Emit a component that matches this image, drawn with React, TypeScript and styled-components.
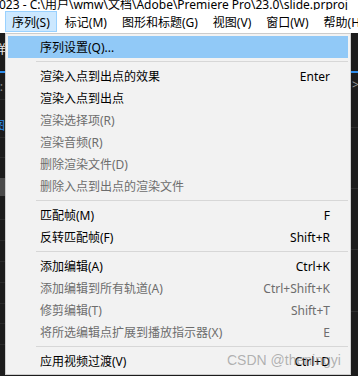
import React from "react";
import styled, { createGlobalStyle } from "styled-components";

const Global = createGlobalStyle`
  html, body { margin: 0; padding: 0; }
  body {
    width: 358px; height: 376px; overflow: hidden;
    background: #1c1c1c;
    font-family: "Noto Sans", "Noto Sans CJK SC", sans-serif;
  }
`;

const Page = styled.div`
  position: relative;
  width: 358px;
  height: 376px;
  display: flex;
  flex-direction: column;
  overflow: hidden;
`;

const TitleBar = styled.div`
  height: 10px;
  background: #ffffff;
  overflow: hidden;
  display: flex;
  align-items: flex-end;
`;

const TitleText = styled.div`
  font-size: 12px;
  line-height: 14px;
  white-space: nowrap;
  color: #000;
  margin-bottom: -2px;
  margin-left: -1px;
`;

const MenuBar = styled.div`
  height: 23px;
  background: #ffffff;
  display: flex;
  align-items: flex-start;
  padding-left: 5px;
  padding-top: 1px;
  box-sizing: border-box;
`;

const BarItem = styled.div<{ $active?: boolean }>`
  height: 21px;
  box-sizing: border-box;
  padding: 0 6px;
  margin-right: 1px;
  display: flex;
  align-items: center;
  font-size: 12px;
  white-space: nowrap;
  color: #000;
  background: ${(p) => (p.$active ? "#cce8ff" : "transparent")};
  border: 1px solid ${(p) => (p.$active ? "#99d1ff" : "transparent")};
`;

const Workspace = styled.div`
  flex: 1;
  display: flex;
  background: #1c1c1c;
`;

const SidePanel = styled.div<{ $w: number }>`
  width: ${(p) => p.$w}px;
  display: flex;
  flex-direction: column;
  overflow: hidden;
`;

const Middle = styled.div`
  flex: 1;
`;

const Strip = styled.div<{ $h: number; $c?: string }>`
  flex: 0 0 ${(p) => p.$h}px;
  background: ${(p) => p.$c ?? "transparent"};
`;

const GlyphRow = styled.div<{ $c: string; $shift: number }>`
  flex: 0 0 14px;
  font-size: 12px;
  line-height: 14px;
  color: ${(p) => p.$c};
  white-space: nowrap;
  text-indent: ${(p) => p.$shift}px;
`;

const Dropdown = styled.div`
  position: absolute;
  left: 5px;
  top: 33px;
  width: 346px;
  box-sizing: border-box;
  background: #f2f2f2;
  border: 1px solid #cccccc;
  padding: 2px;
  display: flex;
  flex-direction: column;
`;

const Item = styled.div<{ $disabled?: boolean; $hover?: boolean }>`
  height: 22px;
  display: flex;
  align-items: center;
  justify-content: space-between;
  padding: 0 18px 0 32px;
  font-size: 12px;
  white-space: nowrap;
  color: ${(p) => (p.$disabled ? "#6d6d6d" : "#000000")};
  background: ${(p) => (p.$hover ? "#91c9f7" : "transparent")};
`;

const Sep = styled.div`
  height: 7px;
  display: flex;
  align-items: center;
  padding-left: 28px;
  &::after {
    content: "";
    flex: 1;
    height: 1px;
    background: #d7d7d7;
  }
`;

const Watermark = styled.div`
  position: absolute;
  left: 227px;
  top: 351px;
  font-family: "Liberation Sans", Arial, sans-serif;
  font-size: 14px;
  line-height: 18px;
  color: rgba(120, 120, 120, 0.55);
  white-space: nowrap;
  pointer-events: none;
`;

type Entry =
  | { sep: true }
  | { label: string; key?: string; disabled?: boolean; hover?: boolean };

const entries: Entry[] = [
  { label: "序列设置(Q)...", hover: true },
  { sep: true },
  { label: "渲染入点到出点的效果", key: "Enter" },
  { label: "渲染入点到出点" },
  { label: "渲染选择项(R)", disabled: true },
  { label: "渲染音频(R)", disabled: true },
  { label: "删除渲染文件(D)", disabled: true },
  { label: "删除入点到出点的渲染文件", disabled: true },
  { sep: true },
  { label: "匹配帧(M)", key: "F" },
  { label: "反转匹配帧(F)", key: "Shift+R" },
  { sep: true },
  { label: "添加编辑(A)", key: "Ctrl+K" },
  { label: "添加编辑到所有轨道(A)", key: "Ctrl+Shift+K", disabled: true },
  { label: "修剪编辑(T)", key: "Shift+T", disabled: true },
  { label: "将所选编辑点扩展到播放指示器(X)", key: "E", disabled: true },
  { sep: true },
  { label: "应用视频过渡(V)", key: "Ctrl+D" },
];

const barItems = ["序列(S)", "标记(M)", "图形和标题(G)", "视图(V)", "窗口(W)", "帮助(H)"];

const LINE = "#2a2a2a";

export default function App() {
  return (
    <Page>
      <Global />
      <TitleBar>
        <TitleText>023 - C:\用户\wmw\文档\Adobe\Premiere Pro\23.0\slide.prproj</TitleText>
      </TitleBar>
      <MenuBar>
        {barItems.map((b, i) => (
          <BarItem key={b} $active={i === 0}>
            {b}
          </BarItem>
        ))}
      </MenuBar>
      <Workspace>
        <SidePanel $w={5}>
          <Strip $h={10} />
          <GlyphRow $c="#e8e8e8" $shift={-6}>祥</GlyphRow>
          <Strip $h={14} />
          <Strip $h={2} $c="#2d8ceb" />
          <Strip $h={7} />
          <GlyphRow $c="#8a8a8a" $shift={-7}>0:</GlyphRow>
          <Strip $h={5} />
          <Strip $h={1} $c={LINE} />
          <Strip $h={19} />
          <GlyphRow $c="#2d8ceb" $shift={-7}>图</GlyphRow>
          <Strip $h={4} />
          <Strip $h={1} $c={LINE} />
          <Strip $h={19} />
          <Strip $h={1} $c={LINE} />
          <Strip $h={20} />
          <Strip $h={18} $c="#4a4a4a" />
          <Strip $h={23} />
          <Strip $h={1} $c={LINE} />
          <Strip $h={20} />
          <Strip $h={1} $c={LINE} />
          <Strip $h={20} />
          <Strip $h={1} $c={LINE} />
          <Strip $h={20} />
          <Strip $h={1} $c={LINE} />
          <Strip $h={20} />
          <Strip $h={1} $c={LINE} />
          <Strip $h={19} />
          <Strip $h={1} $c={LINE} />
          <Strip $h={20} />
          <Strip $h={1} $c={LINE} />
        </SidePanel>
        <Middle />
        <SidePanel $w={7}>
          <Strip $h={38} />
          <Strip $h={2} $c="#2d8ceb" />
          <Strip $h={5} />
          <GlyphRow $c="#9a9a9a" $shift={1}>&gt;E</GlyphRow>
          <Strip $h={35} />
          <Strip $h={1} $c="#2e2e2e" />
          <Strip $h={60} />
          <Strip $h={1} $c="#2e2e2e" />
          <Strip $h={60} />
          <Strip $h={1} $c="#2e2e2e" />
          <Strip $h={61} />
          <Strip $h={1} $c="#2e2e2e" />
        </SidePanel>
      </Workspace>
      <Dropdown>
        {entries.map((e, i) =>
          "sep" in e ? (
            <Sep key={i} />
          ) : (
            <Item key={i} $disabled={e.disabled} $hover={e.hover}>
              <span>{e.label}</span>
              {e.key && <span>{e.key}</span>}
            </Item>
          )
        )}
      </Dropdown>
      <Watermark>CSDN @theningyi</Watermark>
    </Page>
  );
}
